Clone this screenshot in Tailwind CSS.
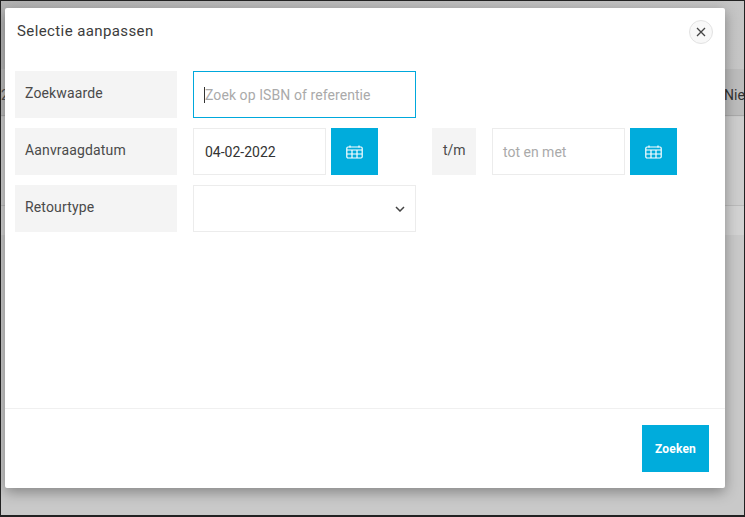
<!DOCTYPE html>
<html lang="nl">
<head>
<meta charset="utf-8">
<script src="https://cdn.jsdelivr.net/npm/@tailwindcss/browser@4"></script>
</head>
<body class="m-0 overflow-hidden">
<div class="relative w-[745px] h-[517px] overflow-hidden bg-[#c9c9c9] border-t border-l border-b-2 border-r border-[#222] font-['Roboto',sans-serif]">
  <div class="absolute inset-x-0 top-0 h-[68px] bg-gradient-to-r from-[#b4b4b4] to-[#c6c6c6]"></div>
  <div class="absolute inset-x-0 top-[68px] h-[47px] bg-[#bcbcbc] border-b border-[#aaa] overflow-hidden">
    <span class="absolute left-[723px] top-[16px] text-[14px] leading-[20px] text-[#333] whitespace-nowrap">Nie</span>
    <span class="absolute left-0 top-[16px] text-[14px] leading-[20px] text-[#555]">2</span>
  </div>
  <div class="absolute inset-x-0 top-[204px] h-[30px] bg-[#d2d2d2] border-t border-[#bbb]"></div>
  <div class="absolute inset-x-0 top-[116px] h-[88px] bg-[#cdcdcd]"></div>

  <div class="absolute left-[4px] top-[7px] w-[720px] h-[480px] bg-white rounded-[2px] shadow-[0_4px_14px_rgba(0,0,0,0.35)] flex flex-col">
    <div class="flex items-start justify-between pl-[12px] pr-[12px] pt-[13px] h-[63px]">
      <h1 class="text-[15px] leading-[20px] tracking-[0.4px] font-normal text-[#3c3c3c]">Selectie aanpassen</h1>
      <button class="mt-[-1px] w-[24px] h-[24px] rounded-full border border-[#e2e2e2] bg-[#f8f8f8] flex items-center justify-center">
        <svg width="10" height="10" viewBox="0 0 10 10" fill="none" stroke="#444" stroke-width="1.3"><path d="M1 1l8 8M9 1l-8 8"/></svg>
      </button>
    </div>
    <div class="flex-1 pl-[10px] flex flex-col gap-[10px]">
      <div class="flex h-[47px] gap-[16px]">
        <div class="w-[162px] bg-[#f4f4f4] pl-[10px] pt-[13px] text-[14px] leading-[18px] text-[#4a4a4a] tracking-[0.15px]">Zoekwaarde</div>
        <div class="w-[223px] border border-[#00a8dc] pl-[10px] pt-[1px] flex items-center text-[14px] tracking-[0.08px] text-[#aaa]"><span class="w-px h-[16px] bg-[#333]"></span>Zoek op ISBN of referentie</div>
      </div>
      <div class="flex h-[47px]">
        <div class="w-[162px] bg-[#f4f4f4] pl-[10px] pt-[13px] text-[14px] leading-[18px] text-[#4a4a4a] tracking-[0.15px]">Aanvraagdatum</div>
        <div class="ml-[16px] w-[133px] border border-[#ececec] pl-[11px] pt-[1px] flex items-center text-[14px] text-[#333]">04-02-2022</div>
        <button class="ml-[5px] w-[47px] bg-[#00acdc] flex items-center justify-center">
          <svg width="17" height="14" viewBox="0 0 17 14" fill="none" stroke="#fff" stroke-width="1.2"><rect x="0.8" y="2" width="15.4" height="11" rx="1.2"/><path d="M0.8 5h15.4M0.8 9h15.4M6 5v8M11 5v8M4 0.5v2M13 0.5v2"/></svg>
        </button>
        <div class="ml-[54px] w-[44px] bg-[#f4f4f4] pl-[11px] pt-[13px] text-[14px] leading-[18px] text-[#4a4a4a]">t/m</div>
        <div class="ml-[16px] w-[133px] border border-[#ececec] pl-[10px] pt-[1px] flex items-center text-[14px] text-[#aaa]">tot en met</div>
        <button class="ml-[5px] w-[47px] bg-[#00acdc] flex items-center justify-center">
          <svg width="17" height="14" viewBox="0 0 17 14" fill="none" stroke="#fff" stroke-width="1.2"><rect x="0.8" y="2" width="15.4" height="11" rx="1.2"/><path d="M0.8 5h15.4M0.8 9h15.4M6 5v8M11 5v8M4 0.5v2M13 0.5v2"/></svg>
        </button>
      </div>
      <div class="flex h-[47px] gap-[16px]">
        <div class="w-[162px] bg-[#f4f4f4] pl-[10px] pt-[13px] text-[14px] leading-[18px] text-[#4a4a4a] tracking-[0.15px]">Retourtype</div>
        <div class="w-[223px] border border-[#ececec] flex items-center justify-end pr-[10px]">
          <svg width="10" height="6" viewBox="0 0 10 6" fill="none" stroke="#444" stroke-width="1.5"><path d="M1 1l4 4 4-4"/></svg>
        </div>
      </div>
    </div>
    <div class="h-[80px] border-t border-[#f0f0f0] flex justify-end items-start pt-[16px] pr-[16px]">
      <button class="w-[67px] h-[47px] bg-[#00acdc] text-white text-[12px] font-bold tracking-[0.2px]">Zoeken</button>
    </div>
  </div>
</div>
</body>
</html>
